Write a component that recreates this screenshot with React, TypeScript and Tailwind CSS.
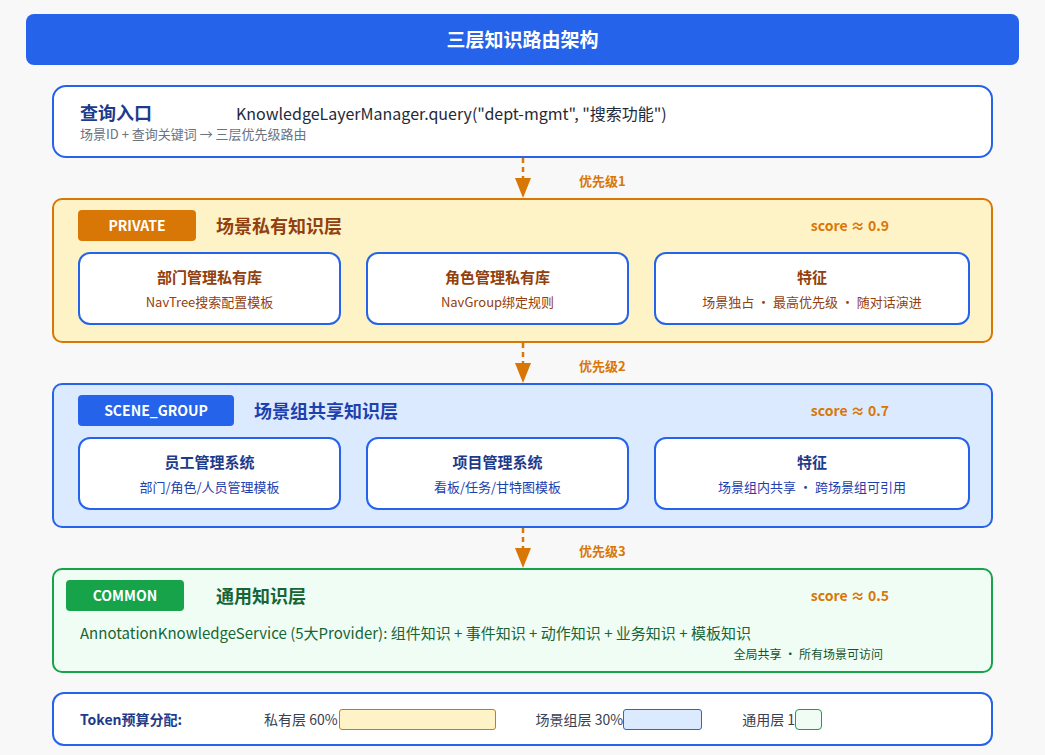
import React from "react";

const F = { fontFamily: '"Noto Sans CJK SC", "Noto Sans", sans-serif' };

function Arrow({ label }: { label: string }) {
  return (
    <div className="relative h-[40px] flex justify-center">
      <svg width="20" height="40" viewBox="0 0 20 40" className="block">
        <line x1="10" y1="0" x2="10" y2="22" stroke="#d97706" strokeWidth="2.5" strokeDasharray="5 4" />
        <polygon points="2,20 18,20 10,40" fill="#d97706" />
      </svg>
      <span className="absolute left-[527px] top-[13px] text-[13px] font-bold text-[#d97706]">{label}</span>
    </div>
  );
}

function Card({ title, sub, tc, sc }: { title: string; sub: string; tc: string; sc: string }) {
  return (
    <div className="h-[73px] bg-white border-2 border-[#2563eb] rounded-[12px] flex flex-col items-center justify-center gap-[4px]">
      <div className={`text-[15px] font-bold ${tc}`}>{title}</div>
      <div className={`text-[13px] ${sc}`}>{sub}</div>
    </div>
  );
}

export default function App() {
  return (
    <div style={F} className="w-[1045px] h-[755px] bg-[#f8f8f8] pt-[14px] px-[26px]">
      <div className="h-[51px] bg-[#2563eb] rounded-[8px] flex items-center justify-center text-white text-[19px] font-bold">三层知识路由架构</div>
      <div className="px-[26px] pt-[20px]">
        <div className="h-[73px] bg-white border-2 border-[#2563eb] rounded-[14px] px-[26px] pt-[12px]">
          <div className="flex items-center">
            <span className="text-[18px] font-bold text-[#1e3a8a] w-[156px]">查询入口</span>
            <span className="text-[16px] text-[#1f2937]">KnowledgeLayerManager.query("dept-mgmt", "搜索功能")</span>
          </div>
          <div className="text-[13px] text-[#6b7280] mt-[-2px]">场景ID + 查询关键词 → 三层优先级路由</div>
        </div>
        <Arrow label="优先级1" />
        <div className="h-[145px] bg-[#fef3c7] border-2 border-[#d97706] rounded-[10px] px-[24px] pt-[8px]">
          <div className="flex items-center h-[34px]">
            <span className="w-[118px] h-[31px] bg-[#d97706] rounded-[4px] text-white font-bold text-[14px] flex items-center justify-center">PRIVATE</span>
            <span className="ml-[20px] text-[18px] font-bold text-[#92400e]">场景私有知识层</span>
            <span className="ml-auto mr-[78px] text-[14px] font-bold text-[#d97706]">score ≈ 0.9</span>
          </div>
          <div className="grid grid-cols-[263px_263px_316px] gap-[25px] mt-[10px]">
            <Card title="部门管理私有库" sub="NavTree搜索配置模板" tc="text-[#92400e]" sc="text-[#92400e]" />
            <Card title="角色管理私有库" sub="NavGroup绑定规则" tc="text-[#92400e]" sc="text-[#92400e]" />
            <Card title="特征" sub="场景独占 · 最高优先级 · 随对话演进" tc="text-[#92400e]" sc="text-[#92400e]" />
          </div>
        </div>
        <Arrow label="优先级2" />
        <div className="h-[145px] bg-[#dbeafe] border-2 border-[#2563eb] rounded-[10px] px-[24px] pt-[8px]">
          <div className="flex items-center h-[34px]">
            <span className="w-[156px] h-[31px] bg-[#2563eb] rounded-[4px] text-white font-bold text-[14px] flex items-center justify-center">SCENE_GROUP</span>
            <span className="ml-[20px] text-[18px] font-bold text-[#1e40af]">场景组共享知识层</span>
            <span className="ml-auto mr-[78px] text-[14px] font-bold text-[#d97706]">score ≈ 0.7</span>
          </div>
          <div className="grid grid-cols-[263px_263px_316px] gap-[25px] mt-[10px]">
            <Card title="员工管理系统" sub="部门/角色/人员管理模板" tc="text-[#1e3a8a]" sc="text-[#1e40af]" />
            <Card title="项目管理系统" sub="看板/任务/甘特图模板" tc="text-[#1e3a8a]" sc="text-[#1e40af]" />
            <Card title="特征" sub="场景组内共享 · 跨场景组可引用" tc="text-[#1e3a8a]" sc="text-[#1e40af]" />
          </div>
        </div>
        <Arrow label="优先级3" />
        <div className="h-[105px] bg-[#f0fdf4] border-2 border-[#16a34a] rounded-[10px] px-[12px] pt-[8px]">
          <div className="flex items-center h-[34px]">
            <span className="w-[118px] h-[31px] bg-[#16a34a] rounded-[4px] text-white font-bold text-[14px] flex items-center justify-center">COMMON</span>
            <span className="ml-[32px] text-[18px] font-bold text-[#166534]">通用知识层</span>
            <span className="ml-auto mr-[90px] text-[14px] font-bold text-[#d97706]">score ≈ 0.5</span>
          </div>
          <div className="mt-[10px] text-[15px] text-[#166534] pl-[14px]">AnnotationKnowledgeService (5大Provider): 组件知识 + 事件知识 + 动作知识 + 业务知识 + 模板知识</div>
          <div className="text-right pr-[96px] text-[12px] text-[#14532d]">全局共享 · 所有场景可访问</div>
        </div>
        <div className="mt-[19px] h-[54px] bg-white border-2 border-[#2563eb] rounded-[12px] flex items-center pl-[26px] text-[14px] text-[#374151]">
          <span className="font-bold text-[#1e3a8a] w-[184px]">Token预算分配:</span>
          <span>私有层 60%</span>
          <span className="ml-[1px] w-[157px] h-[21px] bg-[#fef3c7] border border-[#d97706] rounded-[3px]" />
          <span className="ml-[40px]">场景组层 30%</span>
          <span className="w-[79px] h-[21px] bg-[#dbeafe] border border-[#2563eb] rounded-[3px]" />
          <span className="ml-[40px]">通用层 1</span>
          <span className="w-[27px] h-[21px] bg-[#f0fdf4] border border-[#16a34a] rounded-[4px]" />
        </div>
      </div>
    </div>
  );
}
